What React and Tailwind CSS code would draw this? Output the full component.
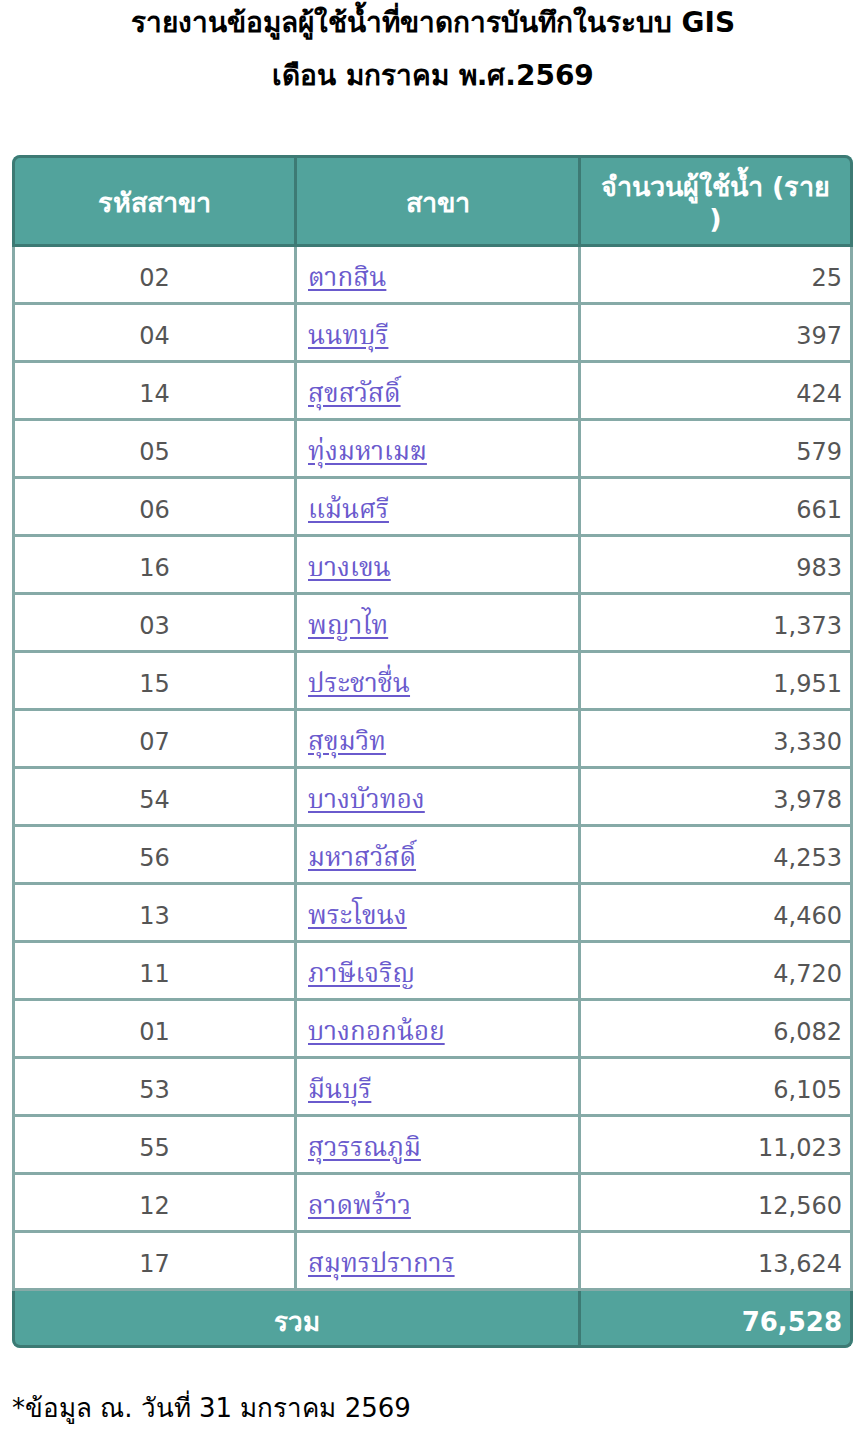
import React from "react";

const rows = [
  ["02", "ตากสิน", "25"],
  ["04", "นนทบุรี", "397"],
  ["14", "สุขสวัสดิ์", "424"],
  ["05", "ทุ่งมหาเมฆ", "579"],
  ["06", "แม้นศรี", "661"],
  ["16", "บางเขน", "983"],
  ["03", "พญาไท", "1,373"],
  ["15", "ประชาชื่น", "1,951"],
  ["07", "สุขุมวิท", "3,330"],
  ["54", "บางบัวทอง", "3,978"],
  ["56", "มหาสวัสดิ์", "4,253"],
  ["13", "พระโขนง", "4,460"],
  ["11", "ภาษีเจริญ", "4,720"],
  ["01", "บางกอกน้อย", "6,082"],
  ["53", "มีนบุรี", "6,105"],
  ["55", "สุวรรณภูมิ", "11,023"],
  ["12", "ลาดพร้าว", "12,560"],
  ["17", "สมุทรปราการ", "13,624"],
];

const sans = { fontFamily: '"DejaVu Sans", "Noto Sans", Tahoma, sans-serif' };

export default function App() {
  return (
    <div className="bg-white w-[866px] min-h-[1440px]" style={sans}>
      <div className="pt-[5px] text-center font-bold text-black text-[28px] leading-[36px]">
        รายงานข้อมูลผู้ใช้น้ำที่ขาดการบันทึกในระบบ GIS
      </div>
      <div className="mt-[17px] text-center font-bold text-black text-[28px] leading-[36px]">
        เดือน มกราคม พ.ศ.2569
      </div>

      <div className="ml-[12px] mt-[61px] w-[841px] rounded-[8px] overflow-hidden">
        <div className="grid grid-cols-[285px_284px_272px] h-[92px] bg-[#52a39c] text-white font-bold text-[27px] leading-[32px]">
          <div className="flex items-center justify-center pt-[4px] border-[3px] border-[#3d7a74] rounded-tl-[8px]">
            รหัสสาขา
          </div>
          <div className="flex items-center justify-center pt-[4px] border-y-[3px] border-r-[3px] border-[#3d7a74]">
            สาขา
          </div>
          <div className="flex items-center justify-center pt-[3px] text-center border-y-[3px] border-r-[3px] border-[#3d7a74] rounded-tr-[8px]">
            <span>
              จำนวนผู้ใช้น้ำ (ราย
              <br />)
            </span>
          </div>
        </div>

        {rows.map(([code, name, n]) => (
          <div
            key={code}
            className="grid grid-cols-[285px_284px_272px] h-[58px] bg-white text-[24px] text-[#555555]"
          >
            <div className="flex items-center justify-center pt-[6px] border-l-[3px] border-r-[3px] border-b-[3px] border-[#86aaa7]">
              {code}
            </div>
            <div className="flex items-center pl-[11px] pt-[10px] border-r-[3px] border-b-[3px] border-[#86aaa7]">
              <a
                href="#"
                className="text-[#6a5acd] text-[26px] underline underline-offset-[3px]"
                style={{ fontFamily: '"Noto Serif Thai", "Liberation Serif", serif' }}
              >
                {name}
              </a>
            </div>
            <div className="flex items-center justify-end pr-[8px] pt-[6px] border-r-[3px] border-b-[3px] border-[#86aaa7]">
              {n}
            </div>
          </div>
        ))}

        <div className="grid grid-cols-[569px_272px] h-[57px] bg-[#52a39c] text-white font-bold">
          <div className="flex items-center justify-center pt-[8px] text-[26px] border-l-[3px] border-b-[3px] border-r-[3px] border-[#3d7a74] rounded-bl-[8px]">
            รวม
          </div>
          <div className="flex items-center justify-end pr-[8px] pt-[8px] text-[26px] border-r-[3px] border-b-[3px] border-[#3d7a74] rounded-br-[8px]">
            76,528
          </div>
        </div>
      </div>

      <div className="ml-[12px] mt-[42px] text-[26px] text-black leading-[36px]">
        *ข้อมูล ณ. วันที่ 31 มกราคม 2569
      </div>
    </div>
  );
}
